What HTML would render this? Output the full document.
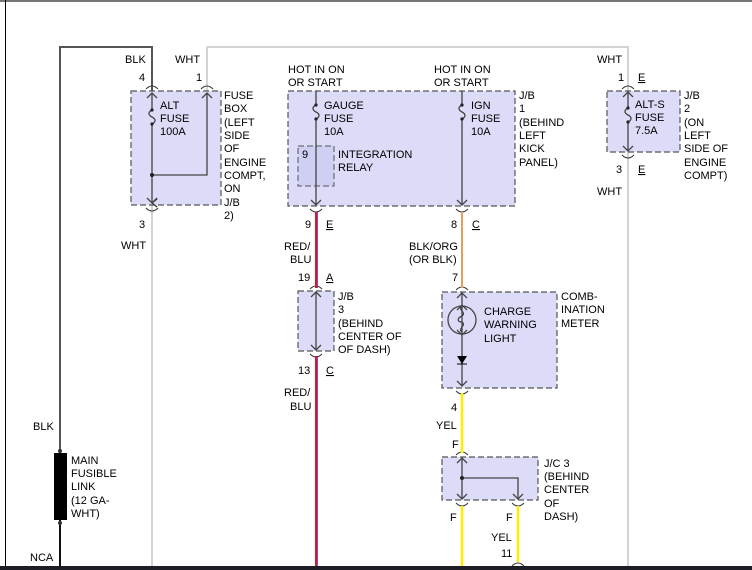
<!DOCTYPE html>
<html><head><meta charset="utf-8"><style>
html,body{margin:0;padding:0;background:#fff;width:752px;height:570px;overflow:hidden}
svg text{font-family:"Liberation Sans",Arial,sans-serif;font-size:11px;fill:#000}
</style></head><body>
<svg width="752" height="570" viewBox="0 0 752 570" xmlns="http://www.w3.org/2000/svg">
<defs>
<marker id="ar" viewBox="0 0 10 10" refX="5" refY="9" markerWidth="8" markerHeight="8" orient="auto"><path d="M1 4 L5 9 L9 4" fill="none" stroke="#333" stroke-width="1.2"/></marker>
</defs>
<rect x="0" y="0" width="752" height="2" fill="#777"/>
<line x1="5.5" y1="0" x2="5.5" y2="570" stroke="#000" stroke-width="1"/>

<!-- WHT light wires -->
<path d="M207 91 V47 H628 V566" fill="none" stroke="#d4d4d4" stroke-width="2"/>
<line x1="152" y1="205" x2="152" y2="566" stroke="#d4d4d4" stroke-width="2"/>
<!-- BLK wire -->
<path d="M152 91 V47 H60 V453" fill="none" stroke="#555" stroke-width="2"/>
<rect x="54" y="453" width="13" height="67" fill="#000"/>
<line x1="60" y1="520" x2="60" y2="566" stroke="#111" stroke-width="2"/>
<circle cx="60" cy="451" r="2" fill="#333"/><circle cx="60" cy="523" r="2" fill="#333"/>

<!-- boxes -->
<g fill="#dcdcf8" stroke="#555" stroke-width="1.2" stroke-dasharray="6,3">
<rect x="131" y="91" width="90" height="114"/>
<rect x="288" y="91" width="227" height="115"/>
<rect x="298" y="291" width="36" height="60"/>
<rect x="442" y="292" width="115" height="96"/>
<rect x="442" y="457" width="96" height="43"/>
<rect x="607" y="91" width="73" height="61"/>
</g>
<rect x="298" y="146" width="36" height="40" fill="#cfcff3" stroke="#555" stroke-dasharray="6,3"/>

<!-- internal lines -->
<g stroke="#444" stroke-width="1.3" fill="none">
<path d="M152 93 V110 M152 124 V203" marker-end="url(#ar)"/>
<path d="M152 110 c-4 2 -4 5 0 7 c4 2 4 5 0 7"/>
<path d="M152 175 H207 V93"/>
<path d="M316 91 V105 M316 119 V204"/>
<path d="M316 105 c-4 2 -4 5 0 7 c4 2 4 5 0 7"/>
<path d="M462 91 V105 M462 119 V204"/>
<path d="M462 105 c-4 2 -4 5 0 7 c4 2 4 5 0 7"/>
<path d="M316 293 V349"/>
<path d="M462 294 V386"/>
<circle cx="462" cy="320" r="14"/>
<path d="M462 306 c-5 4 5 6 0 10 c-5 2 -5 6 0 6 c5 4 -5 6 0 10"/>
<path d="M462 459 V498 M462 478 H518 V498"/>
<path d="M628 93 V108 M628 122 V150"/>
<path d="M628 108 c-4 2 -4 5 0 7 c4 2 4 5 0 7"/>
</g>
<g stroke="#444" stroke-width="1.3" fill="none">
<path d="M147 98 l5 -5 l5 5 M147 198 l5 5 l5 -5 M202 98 l5 -5 l5 5"/>
<path d="M311 200 l5 5 l5 -5 M457 200 l5 5 l5 -5"/>
<path d="M311 297 l5 -5 l5 5 M311 345 l5 5 l5 -5"/>
<path d="M457 298 l5 -5 l5 5 M457 381 l5 5 l5 -5 M457 310 l5 -5 l5 5 M457 330 l5 5 l5 -5"/>
<path d="M457 463 l5 -5 l5 5 M457 494 l5 5 l5 -5 M513 494 l5 5 l5 -5"/>
<path d="M623 97 l5 -5 l5 5 M623 146 l5 5 l5 -5"/>
</g>
<path d="M457 356 h10 l-5 8 z" fill="#000"/><line x1="457" y1="364" x2="467" y2="364" stroke="#000"/>
<g fill="#222"><circle cx="152" cy="175" r="2"/><circle cx="462" cy="478" r="2"/><circle cx="152" cy="110" r="1.6"/><circle cx="152" cy="124" r="1.6"/><circle cx="316" cy="105" r="1.6"/><circle cx="316" cy="119" r="1.6"/><circle cx="462" cy="105" r="1.6"/><circle cx="462" cy="119" r="1.6"/><circle cx="628" cy="108" r="1.6"/><circle cx="628" cy="122" r="1.6"/></g>

<!-- connector arcs -->
<g stroke="#333" fill="none" stroke-width="1">
<path d="M146 89 q6 -6 12 0 M201 89 q6 -6 12 0 M146 208 q6 6 12 0"/>
<path d="M310 209 q6 6 12 0 M456 209 q6 6 12 0"/>
<path d="M310 289 q6 -6 12 0 M310 354 q6 6 12 0"/>
<path d="M456 290 q6 -6 12 0 M456 391 q6 6 12 0"/>
<path d="M456 455 q6 -6 12 0 M456 503 q6 6 12 0 M512 503 q6 6 12 0"/>
<path d="M512 566 q6 -6 12 0"/>
<path d="M622 89 q6 -6 12 0 M622 155 q6 6 12 0"/>
</g>

<!-- colored wires -->
<line x1="316" y1="212" x2="316" y2="288" stroke="#ee1111" stroke-width="2"/>
<line x1="317.5" y1="212" x2="317.5" y2="288" stroke="#3333cc" stroke-width="0.8"/>
<line x1="316" y1="356" x2="316" y2="566" stroke="#ee1111" stroke-width="2"/>
<line x1="317.5" y1="356" x2="317.5" y2="566" stroke="#3333cc" stroke-width="0.8"/>
<line x1="462" y1="212" x2="462" y2="288" stroke="#e0a060" stroke-width="2"/>
<line x1="462" y1="393" x2="462" y2="453" stroke="#ffee00" stroke-width="2.5"/>
<line x1="462" y1="506" x2="462" y2="566" stroke="#ffee00" stroke-width="2.5"/>
<line x1="518" y1="506" x2="518" y2="562" stroke="#ffee00" stroke-width="2.5"/>

<!-- text -->
<text x="125" y="63">BLK</text><text x="175" y="63">WHT</text>
<text x="139" y="81">4</text><text x="196" y="81">1</text>
<text x="160" y="109">ALT</text><text x="160" y="122">FUSE</text><text x="160" y="135">100A</text>
<g><text x="224" y="99">FUSE</text><text x="224" y="112">BOX</text><text x="224" y="126">(LEFT</text><text x="224" y="139">SIDE</text><text x="224" y="152">OF</text><text x="224" y="166">ENGINE</text><text x="224" y="179">COMPT,</text><text x="224" y="192">ON</text><text x="224" y="206">J/B</text><text x="224" y="219">2)</text></g>
<text x="139" y="228">3</text><text x="121" y="249">WHT</text>

<text x="288" y="73">HOT IN ON</text><text x="288" y="86">OR START</text>
<text x="434" y="73">HOT IN ON</text><text x="434" y="86">OR START</text>
<text x="324" y="109">GAUGE</text><text x="324" y="122">FUSE</text><text x="324" y="135">10A</text>
<text x="471" y="109">IGN</text><text x="471" y="122">FUSE</text><text x="471" y="135">10A</text>
<text x="302" y="158">9</text><text x="338" y="158">INTEGRATION</text><text x="338" y="171">RELAY</text>
<text x="519" y="99">J/B</text><text x="519" y="112">1</text><text x="519" y="126">(BEHIND</text><text x="519" y="139">LEFT</text><text x="519" y="152">KICK</text><text x="519" y="166">PANEL)</text>
<text x="305" y="228">9</text><text x="326" y="228" text-decoration="underline">E</text>
<text x="451" y="228">8</text><text x="472" y="228" text-decoration="underline">C</text>
<text x="284" y="250">RED/</text><text x="290" y="263">BLU</text>
<text x="409" y="250">BLK/ORG</text><text x="409" y="263">(OR BLK)</text>
<text x="298" y="281">19</text><text x="326" y="281" text-decoration="underline">A</text>
<text x="338" y="300">J/B</text><text x="338" y="313">3</text><text x="338" y="327">(BEHIND</text><text x="338" y="340">CENTER OF</text><text x="338" y="353">OF DASH)</text>
<text x="298" y="374">13</text><text x="326" y="374" text-decoration="underline">C</text>
<text x="284" y="396">RED/</text><text x="290" y="410">BLU</text>
<text x="452" y="281">7</text>
<text x="484" y="315">CHARGE</text><text x="484" y="328">WARNING</text><text x="484" y="342">LIGHT</text>
<text x="561" y="300">COMB-</text><text x="561" y="313">INATION</text><text x="561" y="327">METER</text>
<text x="451" y="411">4</text><text x="436" y="429">YEL</text><text x="452" y="448">F</text>
<text x="544" y="467">J/C 3</text><text x="544" y="480">(BEHIND</text><text x="544" y="493">CENTER</text><text x="544" y="507">OF</text><text x="544" y="520">DASH)</text>
<text x="450" y="521">F</text><text x="506" y="521">F</text>
<text x="491" y="541">YEL</text><text x="501" y="557">11</text>
<text x="597" y="63">WHT</text><text x="618" y="81">1</text><text x="638" y="81" text-decoration="underline">E</text>
<text x="635" y="108">ALT-S</text><text x="635" y="121">FUSE</text><text x="635" y="134">7.5A</text>
<text x="684" y="99">J/B</text><text x="684" y="112">2</text><text x="684" y="126">(ON</text><text x="684" y="139">LEFT</text><text x="684" y="152">SIDE OF</text><text x="684" y="166">ENGINE</text><text x="684" y="179">COMPT)</text>
<text x="616" y="173">3</text><text x="638" y="173" text-decoration="underline">E</text>
<text x="597" y="195">WHT</text>
<text x="33" y="430">BLK</text>
<text x="71" y="464">MAIN</text><text x="71" y="477">FUSIBLE</text><text x="71" y="490">LINK</text><text x="71" y="504">(12 GA-</text><text x="71" y="517">WHT)</text>
<text x="30" y="561">NCA</text>

<rect x="0" y="566" width="752" height="4" fill="#1b1f25"/>
</svg>
</body></html>
